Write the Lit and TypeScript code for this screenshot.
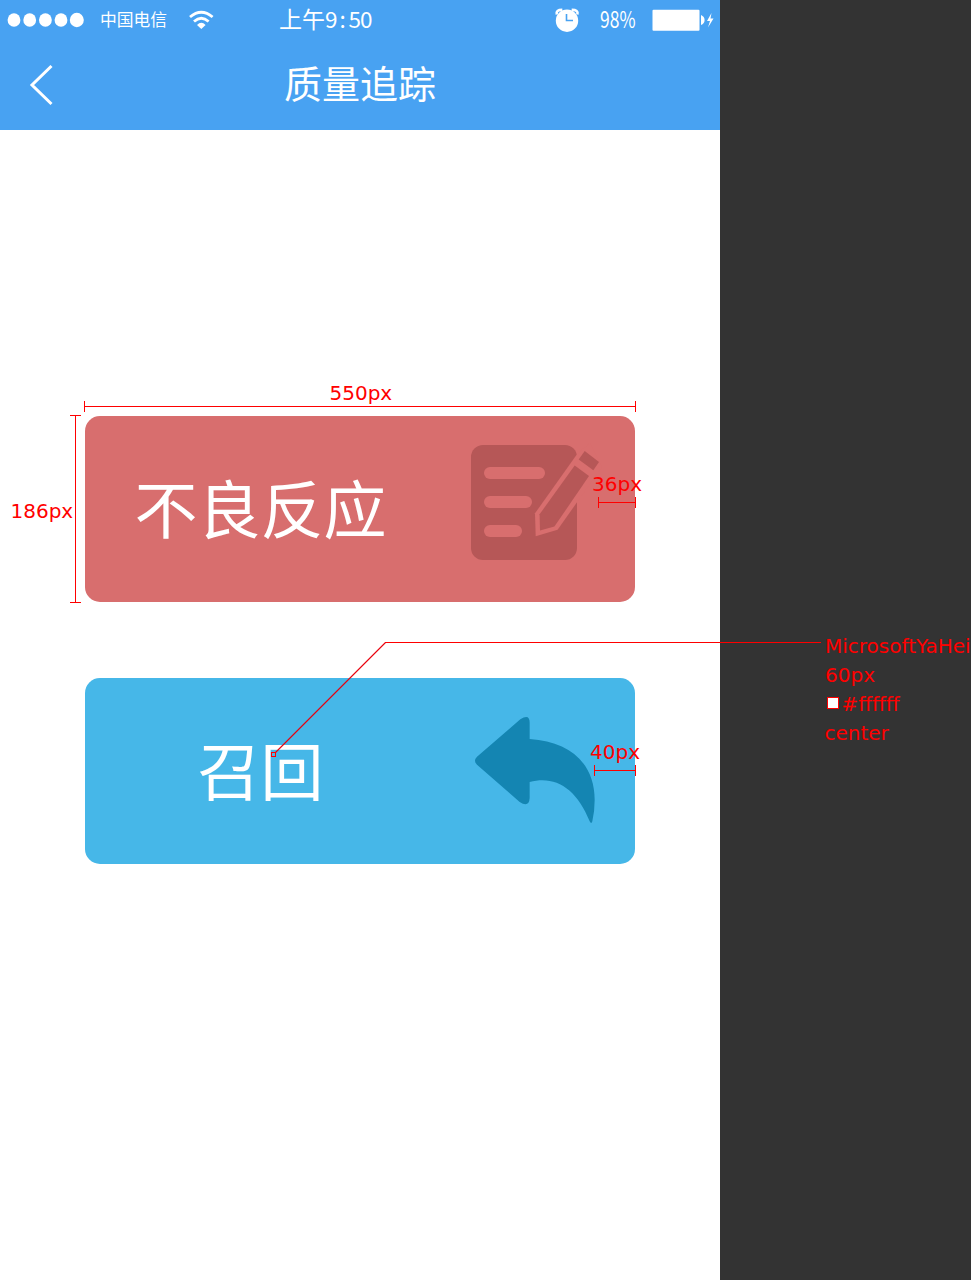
import { LitElement, html, svg, css } from "lit";
import { customElement, property } from "lit/decorators.js";

const noteIcon = svg`
  <rect x="471" y="445" width="106" height="115" rx="12" fill="#b65757"/>
  <g fill="#d86e6e">
    <rect x="484" y="467" width="61" height="12" rx="6"/>
    <rect x="484" y="496" width="48" height="12" rx="6"/>
    <rect x="484" y="525" width="38" height="12" rx="6"/>
    <path d="M577.5 453.5L535 513.3L535.7 536.2L557.6 529.7L602 467L590 443Z"/>
  </g>
  <g fill="#b65757">
    <path d="M574.7 465.6L589 476L554.4 526.6L540 530.4L539.6 514.3Z"/>
    <path d="M584.7 451L599 462L593.3 470.3L578.7 459.4Z"/>
  </g>`;

const replyIcon = svg`
  <path fill="#1485b2" transform="translate(455 700) scale(.33333)"
    d="M66 170L196 58Q224 40 224 68V117C345 125 419 190 419 300Q419 335 412 364Q409 374 404 364C365 265 300 225 224 246V294Q222 324 194 306L66 194Q54 182 66 170Z"/>`;

@customElement("status-bar")
class StatusBar extends LitElement {
  static styles = css`
    :host { display: grid; grid-template-columns: 100px 85px 94px 270px 51px 48px 72px; height: 40px; align-items: center; color: #fff; }
    svg { display: block; }
    span { white-space: nowrap; line-height: 36px; height: 40px; font-family: "Noto Sans CJK SC", sans-serif; }
    .carrier { font-size: 16.8px; line-height: 38px; }
    .time { font-size: 23px; display: flex; }
    .digits { display: grid; grid-template-columns: repeat(4, 11.7px); text-align: center; font-size: 22.5px; }
    .digits i { font-style: normal; }
    .charge { font-size: 23px; transform: scaleX(.76); transform-origin: left; }
  `;
  render() {
    return html`
      <svg width="100" height="40" fill="#fff">
        <ellipse cx="14" cy="20" rx="6.4" ry="6.8"/><ellipse cx="29.7" cy="20" rx="6.4" ry="6.8"/>
        <ellipse cx="45.4" cy="20" rx="6.4" ry="6.8"/><ellipse cx="61" cy="20" rx="6.4" ry="6.8"/>
        <ellipse cx="76.8" cy="20" rx="7" ry="7.2"/>
      </svg>
      <span class="carrier">中国电信</span>
      <svg width="94" height="40" viewBox="185 0 94 40" fill="none" stroke="#fff" stroke-width="2.8">
        <path d="M190 17Q201.300 7.500 212.600 17M194 21.500Q201.300 15 208.600 21.500"/>
        <path d="M197 25Q201.300 20.500 205.600 25L201.300 29Z" fill="#fff" stroke="none"/>
      </svg>
      <span class="time">上午<span class="digits"><i>9</i><i>:</i><i>5</i><i>0</i></span></span>
      <svg width="51" height="40" viewBox="549 0 51 40" fill="none" stroke="#fff">
        <circle cx="567" cy="20.700" r="11.200" fill="#fff" stroke="none"/>
        <path d="M556.800 14.500Q555.500 9.800 562.300 9.800M571.700 9.800Q578.700 9.800 577.400 14.500" stroke-width="2.600"/>
        <path d="M566.500 14V20.500H573" stroke="#48a2f2" stroke-width="1.600"/>
      </svg>
      <span class="charge">98%</span>
      <svg width="72" height="40" viewBox="648 0 72 40" fill="#fff">
        <rect x="652.500" y="9.700" width="47" height="21" rx="1"/>
        <path d="M701 15Q704.600 16.500 704.600 20T701 25Z"/>
        <path d="M711.500 13L707 21H710L708 27.500L713.500 18.500H710.500Z"/>
      </svg>`;
  }
}

@customElement("action-card")
class ActionCard extends LitElement {
  @property() label = "";
  @property() kind = "reaction";
  static styles = css`
    :host { display: block; }
    .card { display: grid; grid-template-columns: 350px 200px; width: 550px; height: 186px; border-radius: 15px; overflow: hidden; align-items: center; }
    .reaction { background: #d86e6e; }
    .recall { background: #46b7e8; }
    .label { text-align: center; color: #fff; font: 63px/90px "Noto Sans CJK SC", sans-serif; padding: 0 0 6px 1px; }
    svg { display: block; }
  `;
  render() {
    const reaction = this.kind === "reaction";
    return html`<div class="card ${this.kind}">
      <div class="label">${this.label}</div>
      <svg width="200" height="186" viewBox=${reaction ? "435 416 200 186" : "435 678 200 186"}>${reaction ? noteIcon : replyIcon}</svg>
    </div>`;
  }
}

@customElement("app-root")
class AppRoot extends LitElement {
  static styles = css`
    :host { display: block; position: relative; width: 971px; height: 1280px; overflow: hidden; background: #333; }
    .screen { width: 720px; height: 1280px; background: #fff; }
    header { height: 130px; background: #48a2f2; }
    .nav { display: grid; grid-template-columns: 80px 560px 80px; height: 90px; align-items: center; }
    .title { text-align: center; color: #fff; font: 38px/84px "Noto Sans CJK SC", sans-serif; padding-bottom: 6px; }
    .cards { display: flex; flex-direction: column; gap: 76px; padding: 286px 85px 0; }
    .marks { position: absolute; left: 0; top: 0; pointer-events: none; }
    .marks text { fill: #f00; font: 20px "DejaVu Sans", sans-serif; }
    .rule { fill: none; stroke: #f00; stroke-width: 1; shape-rendering: crispEdges; }
    svg { display: block; }
  `;
  render() {
    return html`
      <div class="screen">
        <header>
          <status-bar></status-bar>
          <div class="nav">
            <svg width="80" height="90" viewBox="0 40 80 90"><path d="M51.500 66L32 85L51.500 104" fill="none" stroke="#fff" stroke-width="3"/></svg>
            <div class="title">质量追踪</div>
          </div>
        </header>
        <main class="cards">
          <action-card kind="reaction" label="不良反应"></action-card>
          <action-card kind="recall" label="召回"></action-card>
        </main>
      </div>
      <svg class="marks" width="971" height="1280">
        <g class="rule">
          <path d="M84.500 401V412M635.500 401V412M84 406.500H636"/>
          <path d="M70 415.500H81M70 602.500H81M75.500 415V603"/>
          <path d="M598.500 497V508M635.500 497V508M598 502.500H636"/>
          <path d="M594.500 765V776M635.500 765V776M594 770.500H636"/>
          <path d="M385 642.500H821"/>
          <rect x="271.500" y="752.500" width="4" height="4"/>
        </g>
        <path d="M275.500 752.500L385.500 642.500" fill="none" stroke="#e8000c" stroke-width="1.100"/>
        <rect x="827.500" y="697.500" width="11" height="11" fill="#fff" stroke="#f00"/>
        <text x="329.500" y="400">550px</text>
        <text x="10.500" y="518">186px</text>
        <text x="592" y="491">36px</text>
        <text x="590" y="759">40px</text>
        <text x="825" y="653">MicrosoftYaHei</text>
        <text x="825" y="682">60px</text>
        <text x="841.500" y="711">#ffffff</text>
        <text x="824.500" y="740">center</text>
      </svg>`;
  }
}
